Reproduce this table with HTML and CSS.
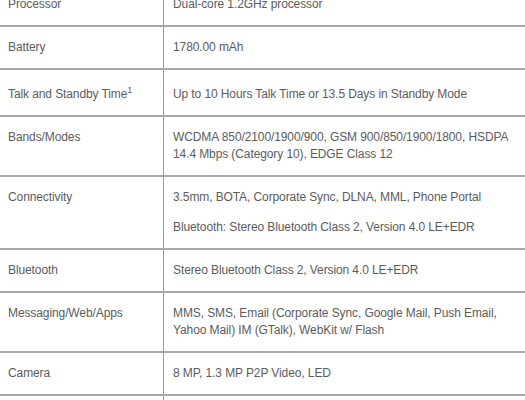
FILE: index.html
```html
<!DOCTYPE html>
<html>
<head>
<meta charset="utf-8">
<link rel="stylesheet" href="styles.css">
</head>
<body>
<table class="specs">
  <tr><td class="label">Processor</td><td class="value">Dual-core 1.2GHz processor</td></tr>
  <tr><td class="label">Battery</td><td class="value">1780.00 mAh</td></tr>
  <tr class="tall"><td class="label">Talk and Standby Time<sup>1</sup></td><td class="value">Up to 10 Hours Talk Time or 13.5 Days in Standby Mode</td></tr>
  <tr><td class="label">Bands/Modes</td><td class="value">WCDMA 850/2100/1900/900, GSM 900/850/1900/1800, HSDPA<br>14.4 Mbps (Category 10), EDGE Class 12</td></tr>
  <tr><td class="label">Connectivity</td><td class="value"><p>3.5mm, BOTA, Corporate Sync, DLNA, MML, Phone Portal</p><p>Bluetooth: Stereo Bluetooth Class 2, Version 4.0 LE+EDR</p></td></tr>
  <tr><td class="label">Bluetooth</td><td class="value">Stereo Bluetooth Class 2, Version 4.0 LE+EDR</td></tr>
  <tr><td class="label">Messaging/Web/Apps</td><td class="value">MMS, SMS, Email (Corporate Sync, Google Mail, Push Email,<br>Yahoo Mail) IM (GTalk), WebKit w/ Flash</td></tr>
  <tr><td class="label">Camera</td><td class="value">8 MP, 1.3 MP P2P Video, LED</td></tr>
  <tr><td class="label">&nbsp;</td><td class="value">&nbsp;</td></tr>
</table>
</body>
</html>
```
FILE: styles.css
```css
html, body {
  margin: 0;
  padding: 0;
  background: #fff;
}
body {
  overflow: hidden;
}
.specs {
  width: 100%;
  margin-top: -16px;
  border-collapse: collapse;
  font-family: "Liberation Sans", Arial, sans-serif;
  font-size: 12px;
  letter-spacing: -0.1px;
  line-height: 17px;
  color: #5c5c5c;
}
.specs td {
  vertical-align: top;
  padding: 12px 8px 12px 8px;
  border-bottom: 2px solid #a8a8a8;
}
.specs .tall td {
  padding-top: 16px;
}
.specs .label {
  width: 147px;
  border-right: 1px solid #999;
}
.specs .value {
  padding-left: 9px;
}
.specs p {
  margin: 0 0 13px 0;
}
.specs p:last-child {
  margin-bottom: 0;
}
.specs sup {
  font-size: 9px;
  line-height: 0;
  vertical-align: 5px;
}
```
